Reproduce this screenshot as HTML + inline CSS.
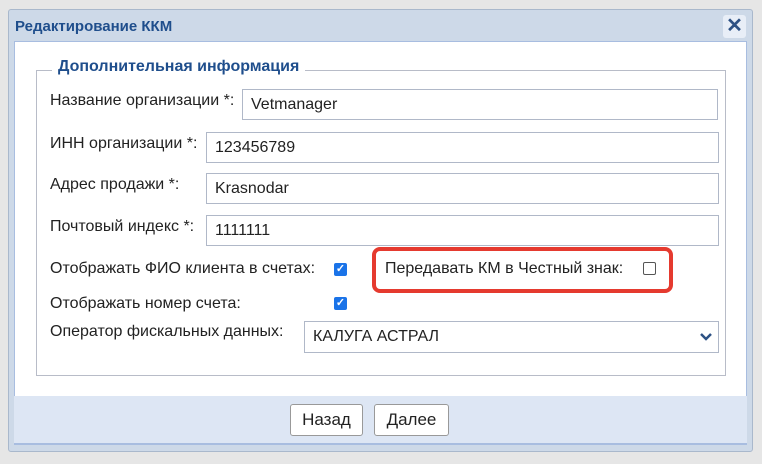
<!DOCTYPE html>
<html><head><meta charset="utf-8"><style>
*{box-sizing:border-box;margin:0;padding:0}
body{width:762px;height:464px;background:#e6e6e6;font-family:"Liberation Sans",Arial,sans-serif;position:relative;overflow:hidden;color:#222}
.dlg{position:absolute;left:8px;top:9px;width:745px;height:443px;background:#cdd9e8;border:1px solid #a9b8cc;border-radius:3px}
.title{position:absolute;left:6px;top:8px;font-weight:bold;font-size:15px;color:#1f4e8c}
.close{position:absolute;left:714px;top:5px;width:23px;height:23px;background:#e8eef7;border-radius:3px;color:#2d5184;font-weight:bold;font-size:20px;text-align:center;line-height:23px}
.content{position:absolute;left:5px;top:31px;width:733px;height:356px;background:#fff;border:1px solid #a8bde0;border-bottom:none}
.footer{position:absolute;left:5px;top:386px;width:733px;height:49px;background:#dde6f4;border-bottom:2px solid #a8bde0}
.fs{position:absolute;left:36px;top:70px;width:690px;height:306px;border:1px solid #b8bcc8}
.legend{position:absolute;left:52px;top:58px;background:#fff;padding:0 6px;font-weight:bold;font-size:16px;color:#1f4e8c}
.lbl{position:absolute;left:50px;font-size:16px;color:#222}
.in{position:absolute;height:31px;border:1px solid #b0b8c8;font-size:16px;padding:6px 8px;background:#fff}
.cb{position:absolute;width:13px;height:13px;border-radius:2px;background:#1a73e8;color:#fff;font-size:11px;line-height:13px;text-align:center;font-weight:bold}
.red{position:absolute;left:372px;top:247px;width:301px;height:46px;border:4px solid #e53a2f;border-radius:8px}
.btn{position:absolute;top:404px;height:32px;border:1px solid #999;border-radius:3px;background:#fff;font-size:17px;text-align:center;line-height:30px}
</style></head><body>
<div class="dlg">
<div class="title">Редактирование ККМ</div>
<div class="close">✕</div>
<div class="content"></div>
<div class="footer"></div>
</div>
<div class="fs"></div>
<div class="legend">Дополнительная информация</div>
<div class="lbl" style="top:92px">Название организации *:</div>
<div class="in" style="left:242px;top:89px;width:476px">Vetmanager</div>
<div class="lbl" style="top:135px">ИНН организации *:</div>
<div class="in" style="left:206px;top:132px;width:513px">123456789</div>
<div class="lbl" style="top:176px">Адрес продажи *:</div>
<div class="in" style="left:206px;top:173px;width:513px">Krasnodar</div>
<div class="lbl" style="top:218px">Почтовый индекс *:</div>
<div class="in" style="left:206px;top:215px;width:513px">1111111</div>
<div class="lbl" style="top:260px">Отображать ФИО клиента в счетах:</div>
<div class="cb" style="left:334px;top:263px">✓</div>
<div class="red"></div>
<div class="lbl" style="left:385px;top:260px">Передавать КМ в Честный знак:</div>
<div style="position:absolute;left:643px;top:262px;width:13px;height:13px;border:1px solid #555;border-radius:2px"></div>
<div class="lbl" style="top:295px">Отображать номер счета:</div>
<div class="cb" style="left:334px;top:297px">✓</div>
<div class="lbl" style="top:323px">Оператор фискальных данных:</div>
<div class="in" style="left:304px;top:321px;width:415px;height:32px">КАЛУГА АСТРАЛ</div>
<svg style="position:absolute;left:700px;top:332px" width="12" height="10"><path d="M1 2 L6 7 L11 2" stroke="#2d5184" stroke-width="2.5" fill="none"/></svg>
<div class="btn" style="left:290px;width:73px">Назад</div>
<div class="btn" style="left:374px;width:75px">Далее</div>
</body></html>
